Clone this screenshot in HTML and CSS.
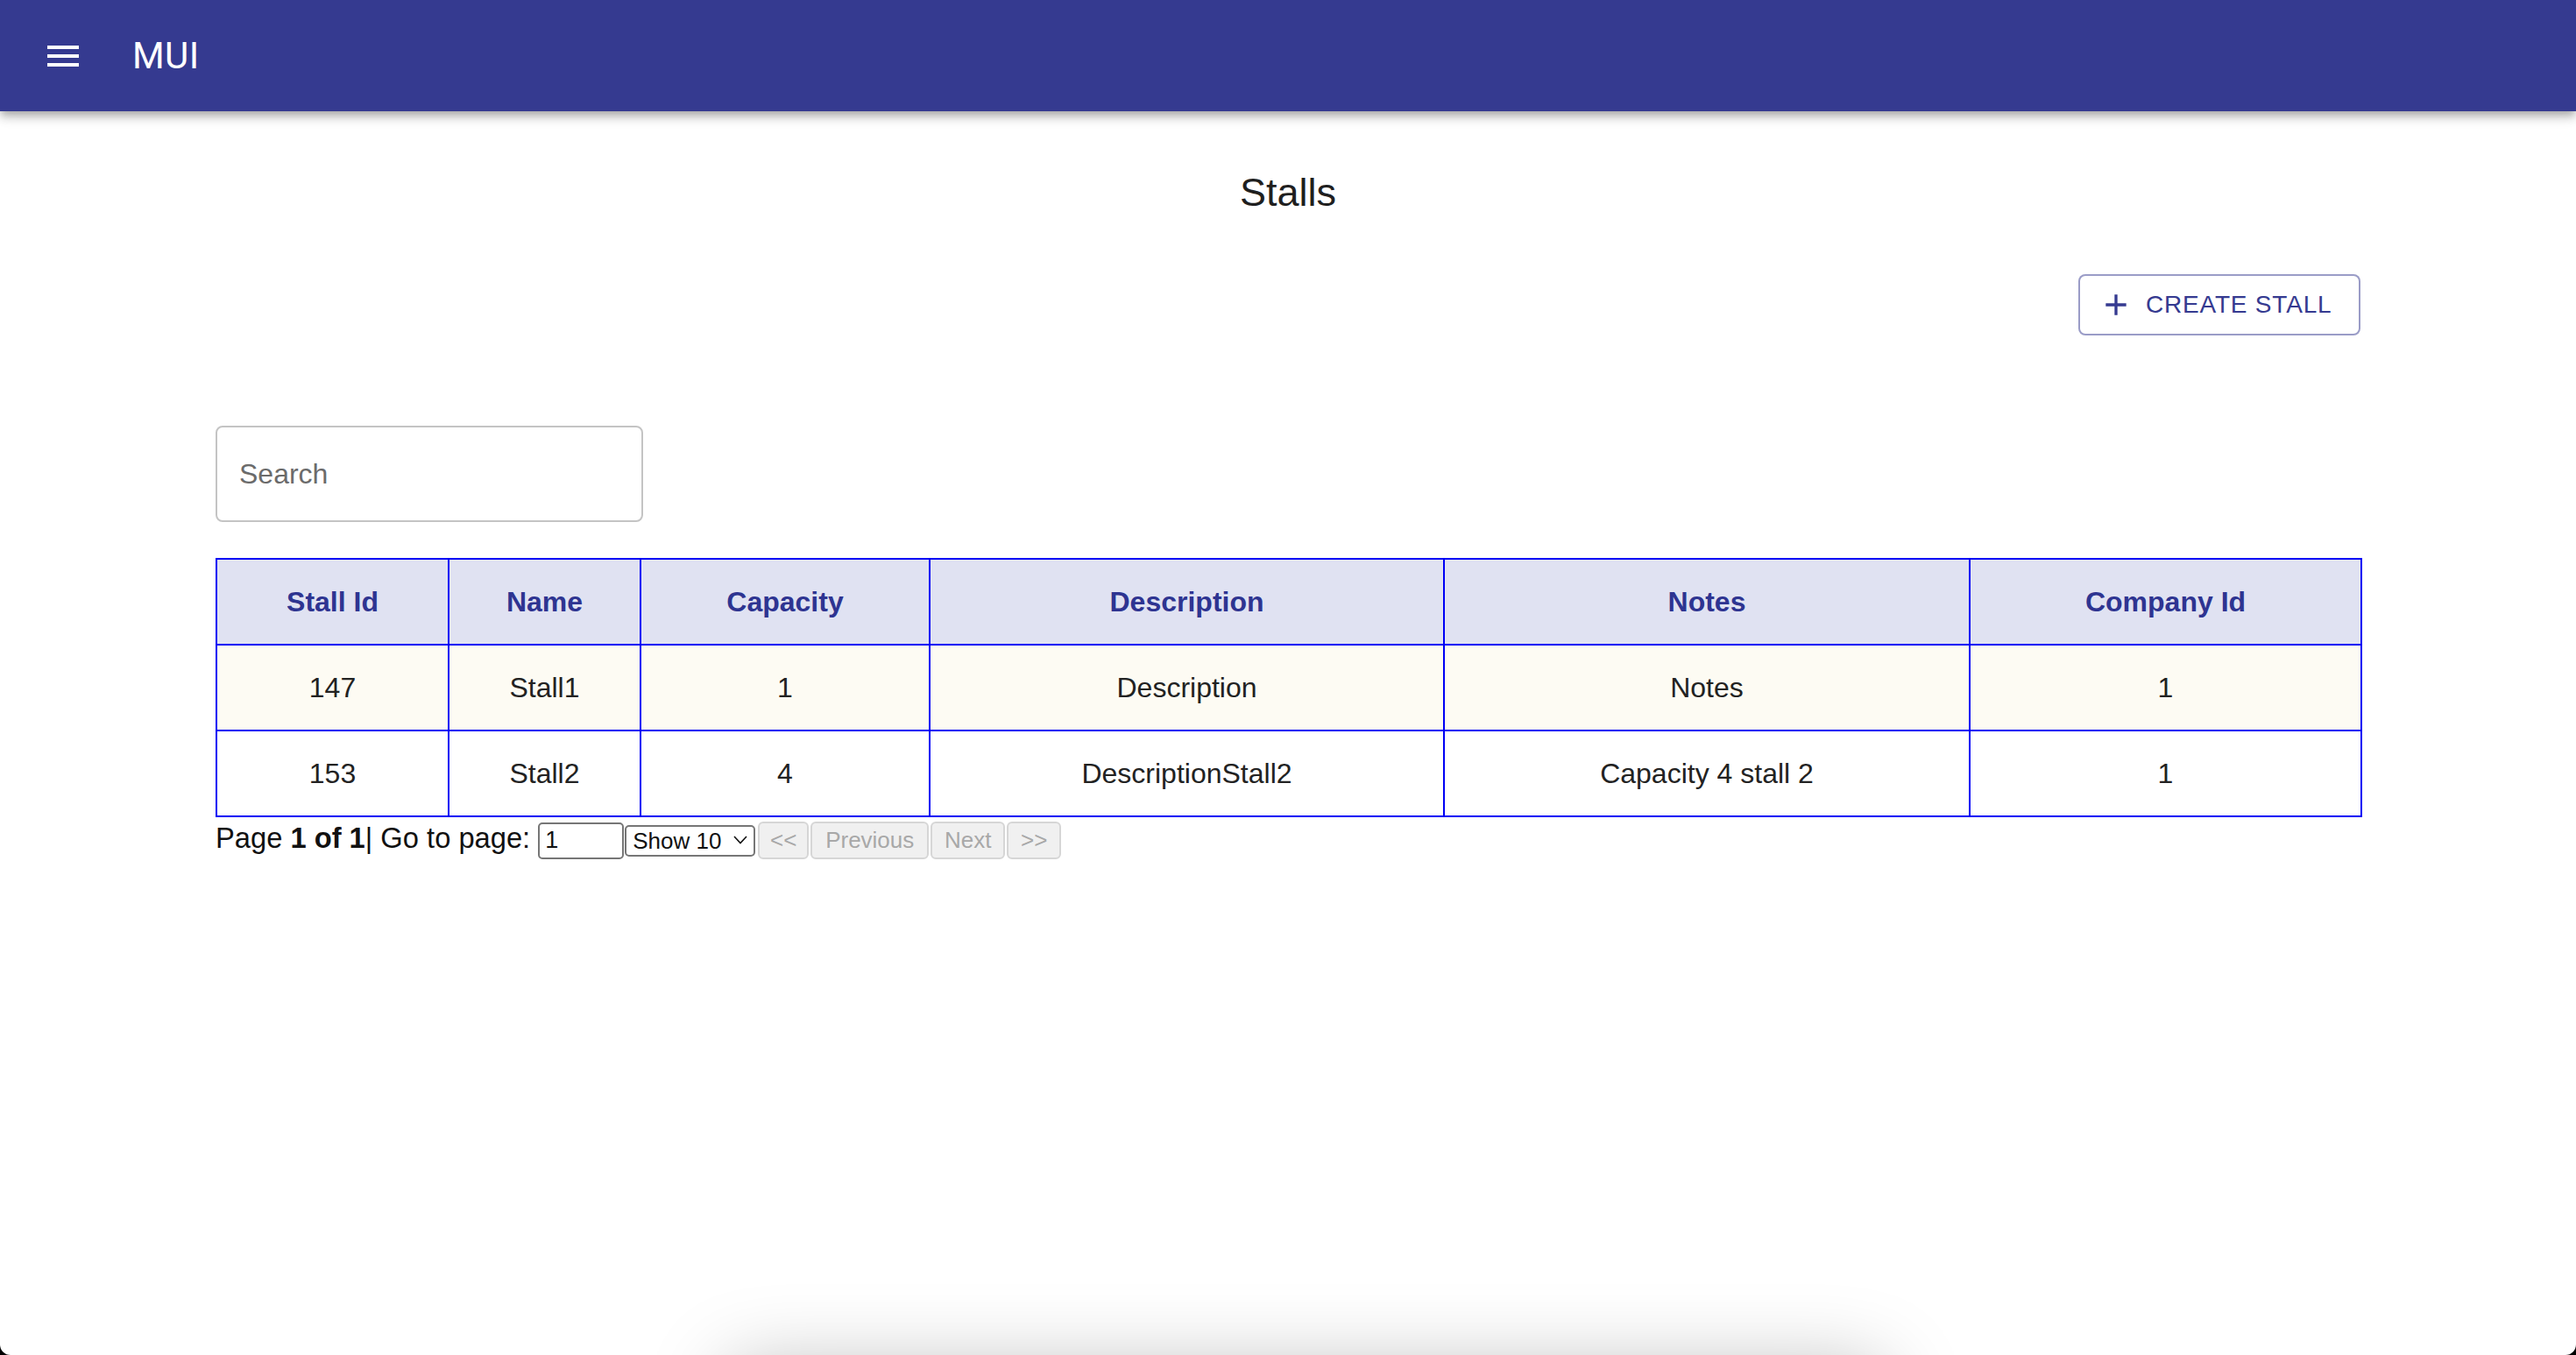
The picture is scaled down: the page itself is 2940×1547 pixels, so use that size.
FILE: index.html
```html
<!DOCTYPE html>
<html lang="en">
<head>
<meta charset="utf-8">
<title>Stalls</title>
<link rel="stylesheet" href="styles.css">
</head>
<body>
<header class="appbar">
  <div class="toolbar">
    <button class="menu-btn" aria-label="menu">
      <svg class="menu-icon" viewBox="0 0 24 24" width="48" height="48"><path d="M3 18h18v-2H3v2zm0-5h18v-2H3v2zm0-7v2h18V6H3z"/></svg>
    </button>
    <div class="brand">MUI</div>
  </div>
</header>
<main class="page">
  <h1 class="title">Stalls</h1>
  <div class="actions">
    <button class="create-btn">
      <svg class="plus-icon" viewBox="0 0 24 24" width="40" height="40"><path d="M19 13h-6v6h-2v-6H5v-2h6V5h2v6h6v2z"/></svg>
      <span>CREATE STALL</span>
    </button>
  </div>
  <div class="search">
    <input class="search-input" type="text" placeholder="Search">
  </div>
  <table class="grid">
    <colgroup>
      <col class="c1"><col class="c2"><col class="c3"><col class="c4"><col class="c5"><col class="c6">
    </colgroup>
    <thead>
      <tr><th>Stall Id</th><th>Name</th><th>Capacity</th><th>Description</th><th>Notes</th><th>Company Id</th></tr>
    </thead>
    <tbody>
      <tr class="odd"><td>147</td><td>Stall1</td><td>1</td><td>Description</td><td>Notes</td><td>1</td></tr>
      <tr><td>153</td><td>Stall2</td><td>4</td><td>DescriptionStall2</td><td>Capacity 4 stall 2</td><td>1</td></tr>
    </tbody>
  </table>
  <div class="pager">
    <span class="pager-text">Page <strong>1 of 1</strong>| Go to page:</span>
    <input class="goto" type="number" value="1">
    <span class="select-wrap">
      <select class="page-size"><option>Show 10</option><option>Show 20</option></select>
      <svg class="chev" viewBox="0 0 16 10" width="16" height="10"><path d="M1 1l7 7.5L15 1" fill="none" stroke="#111" stroke-width="1.6"/></svg>
    </span>
    <button class="pg pg-first" disabled>&lt;&lt;</button>
    <button class="pg pg-prev" disabled>Previous</button>
    <button class="pg pg-next" disabled>Next</button>
    <button class="pg pg-last" disabled>&gt;&gt;</button>
  </div>
</main>
<div class="sheet-shadow"></div>
</body>
</html>
```
FILE: styles.css
```css
html {
  background: #000;
}
body {
  margin: 0;
  height: 1547px;
  overflow: hidden;
  background: #fff;
  border-radius: 0 0 12px 12px;
  font-family: "Liberation Sans", Arial, sans-serif;
  color: #1f1f1f;
}
.appbar {
  position: relative;
  z-index: 2;
  height: 127px;
  background: #353a90;
  box-shadow: 0 4px 8px -2px rgba(0,0,0,0.2), 0 8px 10px 0 rgba(0,0,0,0.14), 0 2px 19px 0 rgba(0,0,0,0.12);
}
.toolbar {
  display: flex;
  align-items: center;
  height: 100%;
  padding-left: 48px;
}
.menu-btn {
  display: flex;
  width: 48px;
  height: 48px;
  padding: 0;
  margin: 0 55px 0 0;
  border: 0;
  background: none;
}
.menu-icon {
  fill: #fff;
}
.brand {
  font-family: Roboto, "Liberation Sans", sans-serif;
  font-weight: 400;
  font-size: 42px;
  letter-spacing: 0.4px;
  color: #fff;
}
.page {
  width: 2448px;
  margin: 0 auto;
}
.title {
  margin: 66px 0 0;
  font-size: 45px;
  font-weight: 400;
  line-height: 54px;
  text-align: center;
  color: #1f1f1f;
}
.actions {
  display: flex;
  justify-content: flex-end;
  margin-top: 66px;
}
.create-btn {
  display: flex;
  align-items: center;
  box-sizing: border-box;
  width: 322px;
  height: 70px;
  padding: 0 0 0 21px;
  border: 2px solid rgba(53,58,144,0.5);
  border-radius: 8px;
  background: #fff;
  color: #353a90;
  font-family: "Liberation Sans", Arial, sans-serif;
  font-size: 28px;
  letter-spacing: 0.8px;
}
.plus-icon {
  fill: #353a90;
  margin-right: 14px;
  flex: none;
}
.search {
  margin-top: 103px;
}
.search-input {
  display: block;
  box-sizing: border-box;
  width: 488px;
  height: 110px;
  padding: 0 25px;
  border: 2px solid #c4c4c4;
  border-radius: 8px;
  font-family: "Liberation Sans", Arial, sans-serif;
  font-size: 32px;
  color: #333;
  outline: none;
}
.search-input::placeholder {
  color: #6b6b6b;
  opacity: 1;
}
.grid {
  width: 2448px;
  margin-top: 41px;
  table-layout: fixed;
  border-collapse: collapse;
  font-size: 32px;
}
.c1 { width: 265px; }
.c2 { width: 219px; }
.c3 { width: 330px; }
.c4 { width: 587px; }
.c5 { width: 600px; }
.c6 { width: 447px; }
.grid th,
.grid td {
  height: 96px;
  padding: 0;
  border: 2px solid #0000f5;
  text-align: center;
  vertical-align: middle;
}
.grid th {
  background: #e0e2f2;
  color: #2e3491;
  font-weight: 700;
}
.grid td {
  color: #222;
}
.grid tr.odd td {
  background: #fdfbf3;
}
.pager {
  display: flex;
  align-items: center;
  height: 43px;
  margin-top: 5px;
}
.pager-text {
  align-self: flex-start;
  font-size: 32.7px;
  line-height: normal;
  margin-right: 9px;
  color: #111;
  white-space: pre;
}
.goto {
  box-sizing: border-box;
  width: 98px;
  height: 42px;
  padding: 0 6px;
  border: 2px solid #767676;
  border-radius: 5px;
  font-family: "Liberation Sans", Arial, sans-serif;
  font-size: 27px;
  color: #111;
  -moz-appearance: textfield;
}
.goto::-webkit-inner-spin-button,
.goto::-webkit-outer-spin-button {
  -webkit-appearance: none;
  margin: 0;
}
.select-wrap {
  position: relative;
  display: flex;
  margin-left: 1px;
}
.page-size {
  box-sizing: border-box;
  width: 149px;
  height: 36px;
  padding: 0 0 0 7px;
  border: 2px solid #767676;
  border-radius: 5px;
  background: #fff;
  font-family: "Liberation Sans", Arial, sans-serif;
  font-size: 26px;
  color: #111;
  -webkit-appearance: none;
  appearance: none;
}
.chev {
  position: absolute;
  right: 9px;
  top: 12px;
  pointer-events: none;
}
.pg {
  box-sizing: border-box;
  height: 43px;
  padding: 0;
  border: 2px solid #d6d6d6;
  border-radius: 6px;
  background: #f0f0f0;
  color: #a8a8a8;
  font-family: "Liberation Sans", Arial, sans-serif;
  font-size: 26px;
  margin-left: 2px;
}
.pg-first { width: 58px; margin-left: 3px; }
.pg-prev { width: 135px; }
.pg-next { width: 85px; }
.pg-last { width: 62px; }
.sheet-shadow {
  position: fixed;
  left: 830px;
  top: 1560px;
  width: 1320px;
  height: 200px;
  border-radius: 20px;
  background: #fff;
  box-shadow: 0 0 90px rgba(0,0,0,0.26);
}
```
